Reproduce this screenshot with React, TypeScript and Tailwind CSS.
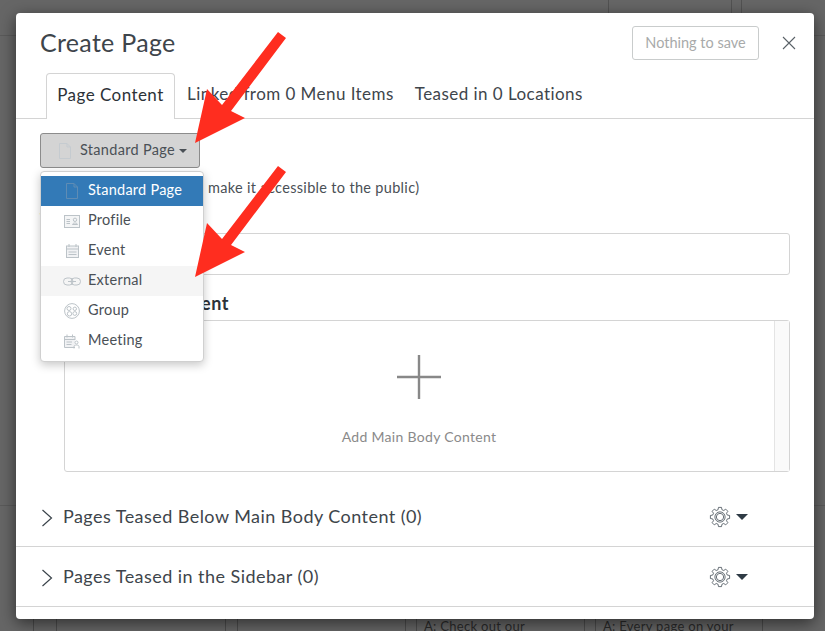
import React from "react";

const gearPath = (() => {
  const pts: string[] = [];
  const n = 8;
  for (let i = 0; i < n; i++) {
    const a = (i / n) * Math.PI * 2 - Math.PI / 2;
    const step = (Math.PI * 2) / n;
    const p = (r: number, t: number) => `${(12 + r * Math.cos(t)).toFixed(2)} ${(12 + r * Math.sin(t)).toFixed(2)}`;
    pts.push(`${i === 0 ? "M" : "L"}${p(8.2, a - step * 0.33)}`);
    pts.push(`L${p(10.6, a - step * 0.2)}`);
    pts.push(`L${p(10.6, a + step * 0.2)}`);
    pts.push(`L${p(8.2, a + step * 0.33)}`);
  }
  return pts.join(" ") + " Z";
})();

function Gear() {
  return (
    <svg width="22" height="22" viewBox="0 0 24 24" fill="none" stroke="#4a545c" strokeWidth="0.9">
      <path d={gearPath} strokeLinejoin="round" />
      <circle cx="12" cy="12" r="5.6" />
      <circle cx="12" cy="12" r="4" />
    </svg>
  );
}

function Caret({ className }: { className: string }) {
  return <span className={`inline-block border-x-transparent border-b-0 ${className}`} />;
}

function IconFile({ stroke = "#c5cbd0" }: { stroke?: string }) {
  return (
    <svg width="14" height="16" viewBox="0 0 14 16" fill="none" stroke={stroke} strokeWidth="1">
      <path d="M1.5 .5H9L12.5 4V15.5H1.5Z" />
      <path d="M9 .5V4H12.5" />
    </svg>
  );
}
function IconProfile() {
  return (
    <svg width="16" height="13" viewBox="0 0 16 13" fill="none" stroke="#bcc3c8" strokeWidth="1">
      <rect x=".5" y=".5" width="15" height="12" fill="#f4f5f6" />
      <path d="M2.5 4.5H6M2.5 6.5H6M2.5 8.5H6" />
      <circle cx="11" cy="4.8" r="1.7" />
      <path d="M8.5 9.5C8.8 7.5 13.2 7.5 13.5 9.5Z" />
    </svg>
  );
}
function IconCalendar() {
  return (
    <svg width="13" height="14" viewBox="0 0 13 14" fill="none" stroke="#bcc3c8" strokeWidth="1">
      <rect x=".5" y="2" width="12" height="11.5" fill="#f1f2f4" />
      <path d="M3 0V3M10 0V3M.5 5H12.5M2.5 8H10.5M2.5 10.5H10.5" />
    </svg>
  );
}
function IconLink() {
  return (
    <svg width="18" height="9" viewBox="0 0 18 9" fill="none" stroke="#bcc3c8" strokeWidth="1">
      <rect x=".5" y="1" width="9.5" height="7" rx="3.5" />
      <rect x="8" y="1" width="9.5" height="7" rx="3.5" />
      <path d="M5 4.5H13" />
    </svg>
  );
}
function IconGroup() {
  return (
    <svg width="16" height="16" viewBox="0 0 16 16" fill="none" stroke="#bcc3c8" strokeWidth="1">
      <circle cx="8" cy="8" r="7.4" />
      <circle cx="5" cy="5.5" r="2" />
      <circle cx="10.8" cy="5.8" r="1.7" />
      <circle cx="5.5" cy="10.8" r="2.2" />
      <circle cx="10.8" cy="10.5" r="1.9" />
    </svg>
  );
}
function IconMeeting() {
  return (
    <svg width="16" height="15" viewBox="0 0 16 15" fill="none" stroke="#bcc3c8" strokeWidth="1">
      <path d="M11 13.5H.5V2.5H11V6" fill="#f1f2f4" />
      <path d="M3 .5V3.5M8.5 .5V3.5M.5 5.5H11M2.5 8H8M2.5 10.5H7.5" />
      <circle cx="12.5" cy="8.5" r="1.5" />
      <path d="M10 14.5V12.5C10 10.5 15 10.5 15 12.5V14.5" />
    </svg>
  );
}

const items = [
  { label: "Standard Page", icon: <IconFile stroke="#5f8cb4" />, cls: "bg-[#337ab7] text-white" },
  { label: "Profile", icon: <IconProfile />, cls: "text-[#4a5056]" },
  { label: "Event", icon: <IconCalendar />, cls: "text-[#4a5056]" },
  { label: "External", icon: <IconLink />, cls: "bg-[#f5f5f5] text-[#4a5056]" },
  { label: "Group", icon: <IconGroup />, cls: "text-[#4a5056]" },
  { label: "Meeting", icon: <IconMeeting />, cls: "text-[#4a5056]" },
];

function AccordionRow({ label }: { label: string }) {
  return (
    <div className="flex h-[60px] shrink-0 items-center border-b border-[#d4d4d4] pl-[25px] pr-[66px]">
      <svg width="12" height="18" viewBox="0 0 12 18" fill="none" stroke="#3b444b" strokeWidth="1.2" className="mr-[10px] mt-[3px]">
        <path d="M1.5 1L10.5 9L1.5 17" />
      </svg>
      <span className="flex-1 text-[18px] tracking-[0.45px] text-[#3e454b]">{label}</span>
      <Gear />
      <Caret className="ml-[5px] mt-[1px] border-x-[6px] border-t-[6px] border-t-[#2f3b45]" />
    </div>
  );
}

function Arrow({ dy }: { dy: number }) {
  return (
    <polygon
      transform={`translate(0 ${dy})`}
      fill="#ff2d1f"
      points="195,143 207,89 222,105 278,32 286,38 231,111 245,118"
    />
  );
}

export default function App() {
  return (
    <div className="relative flex h-[631px] w-[825px] flex-col justify-between overflow-hidden bg-[#666666] font-[Lato,sans-serif]">
      {/* Dimmed page behind the dialog */}
      <div className="flex h-[36px] border-b border-[#5a5a5a] pl-[608px]">
        <div className="w-[124px] border-x border-[#525252]" />
        <div className="ml-[9px] w-[30px] border-l border-[#525252]" />
      </div>
      <div className="flex h-[126px] border-t border-[#5a5a5a] pl-[33px] text-[13px] tracking-[0.3px] text-[#2a2a2a]">
        <div className="w-[24px] border-x border-[#4c4c4c]" />
        <div className="w-[169px] border-r border-[#4c4c4c]" />
        <div className="ml-[11px] w-[169px] border-x border-[#4c4c4c]" />
        <div className="ml-[10px] w-[169px] whitespace-nowrap border-x border-[#4c4c4c] pl-[7px] pt-[111px]">A: Check out our</div>
        <div className="ml-[10px] w-[168px] whitespace-nowrap border-x border-[#4c4c4c] pl-[7px] pt-[111px]">A: Every page on your</div>
      </div>

      {/* Dialog */}
      <div className="absolute left-[16px] top-[13px] flex h-[606px] w-[798px] flex-col overflow-hidden rounded-[4px] bg-white shadow-[0_4px_16px_rgba(0,0,0,0.55)]">
        <div className="flex h-[60px] shrink-0 items-center justify-between pb-[1px] pl-[24px] pr-[18px]">
          <h1 className="text-[25px] leading-none tracking-[0.3px] text-[#3e454b]">Create Page</h1>
          <div className="flex items-center gap-[23px]">
            <button className="h-[34px] w-[127px] rounded-[3px] border border-[#c9cccc] text-[14.5px] text-[#a8aaaa]">
              Nothing to save
            </button>
            <svg width="14" height="14" viewBox="0 0 14 14" stroke="#5a6268" strokeWidth="1.1">
              <path d="M1 1L13 13M13 1L1 13" />
            </svg>
          </div>
        </div>

        <div className="flex h-[46px] shrink-0 border-b border-[#d4d4d4] pl-[30px] text-[17px] tracking-[0.45px]">
          <div className="flex h-[46px] w-[129px] items-center justify-center rounded-t-[4px] border border-b-0 border-[#d4d4d4] bg-white pb-[3px] text-[#2c3238]">
            Page Content
          </div>
          <div className="flex items-center pb-[3px] pl-[12px] text-[#3e454b]">Linked from 0 Menu Items</div>
          <div className="flex items-center pb-[3px] pl-[21px] text-[#3e454b]">Teased in 0 Locations</div>
        </div>

        <div className="flex min-h-0 flex-1 flex-col">
          <div className="flex flex-col px-[24px]">
            <button className="mt-[14px] flex h-[35px] w-[160px] items-center rounded-[3px] border border-[#8c8c8c] bg-[#d4d4d4] pl-[17px] text-[14.5px] tracking-[0.3px] text-[#4a5056]">
              <IconFile />
              <span className="ml-[8px] pb-[1px]">Standard Page</span>
              <Caret className="ml-[4px] border-x-[4px] border-t-[4px] border-t-[#4a5056]" />
            </button>
            <div className="mt-[11px] flex h-[18px] items-center text-[14.5px] tracking-[0.32px] text-[#4a5056]">
              <span className="h-[14px] w-[8px] rounded-l-full bg-[#c9302c]" />
              <span className="ml-[160px] whitespace-nowrap">make it accessible to the public)</span>
            </div>
            <div className="mt-[14px] h-[14px] text-[14px] font-bold leading-[14px] text-[#3e454b]">Title</div>
            <div className="mt-[8px] h-[42px] w-[750px] rounded-[3px] border border-[#d4d4d4]" />
            <div className="mt-[17px] h-[22px] pl-[24px] text-[18px] font-bold leading-[22px] tracking-[0.55px] text-[#2c3238]">
              Main Body Content
            </div>
          </div>
          <div className="ml-[48px] mt-[6px] flex h-[152px] w-[726px] shrink-0 rounded-[3px] border border-[#d4d4d4]">
            <div className="flex flex-1 flex-col items-center pr-[1px] pt-[34px]">
              <svg width="44" height="44" viewBox="0 0 44 44" stroke="#888888" strokeWidth="2.4">
                <path d="M22 0V44M0 22H44" />
              </svg>
              <div className="mt-[27px] text-[14px] tracking-[0.3px] text-[#8a8a8a]">Add Main Body Content</div>
            </div>
            <div className="w-[15px] border-l border-[#e4e4e4] bg-[#fafafa]" />
          </div>
          <div className="mt-[15px] flex flex-col">
            <AccordionRow label="Pages Teased Below Main Body Content (0)" />
            <AccordionRow label="Pages Teased in the Sidebar (0)" />
          </div>
        </div>

        {/* Open dropdown menu */}
        <div className="absolute left-[24px] top-[158px] w-[164px] rounded-[4px] border border-[#d0d0d0] bg-white pb-[5px] pt-[4px] shadow-[0_3px_10px_rgba(0,0,0,0.22)]">
          {items.map((it) => (
            <div key={it.label} className={`flex h-[30px] items-center text-[14.5px] tracking-[0.25px] ${it.cls}`}>
              <span className="flex w-[47px] shrink-0 justify-center pl-[15px]">{it.icon}</span>
              <span className="pb-[2px]">{it.label}</span>
            </div>
          ))}
        </div>
      </div>

      {/* Annotation arrows */}
      <svg className="pointer-events-none absolute left-0 top-0" width="825" height="631">
        <Arrow dy={0} />
        <Arrow dy={134} />
      </svg>
    </div>
  );
}
